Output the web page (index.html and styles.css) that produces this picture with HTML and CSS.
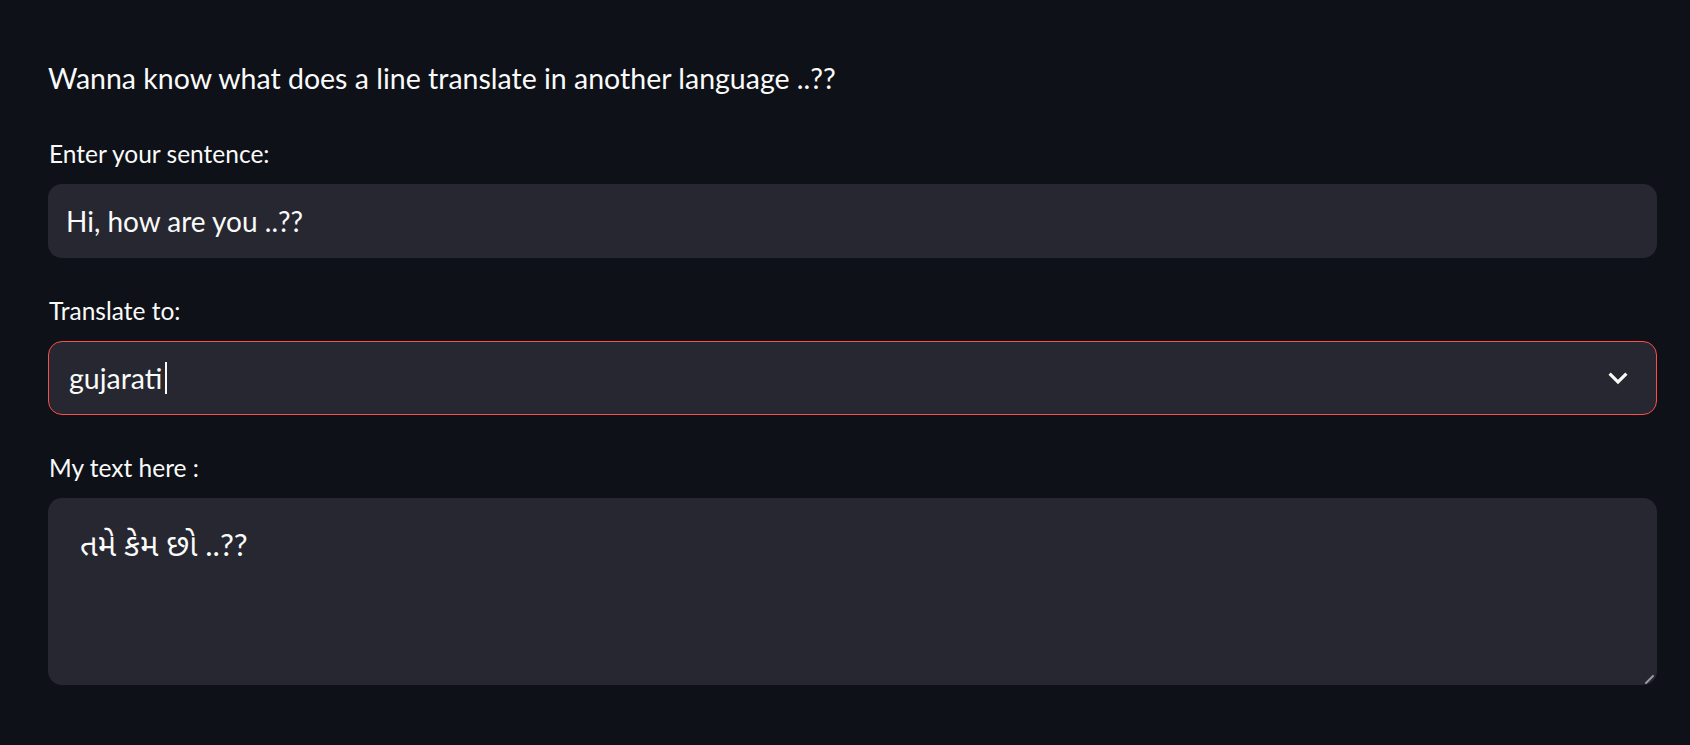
FILE: index.html
```html
<!DOCTYPE html>
<html lang="en">
<head>
<meta charset="utf-8">
<title>Translator</title>
<link rel="stylesheet" href="styles.css">
</head>
<body>
<main class="app">
  <p class="intro">Wanna know what does a line translate in another language ..??</p>

  <div class="widget">
    <label class="label" for="sentence">Enter your sentence:</label>
    <input id="sentence" class="field" type="text" value="Hi, how are you ..??">
  </div>

  <div class="widget">
    <label class="label">Translate to:</label>
    <div class="select">
      <span class="select-value">gujarati</span><span class="caret"></span>
      <svg class="chevron" viewBox="0 0 24 24" aria-hidden="true"><path d="M16.59 8.59L12 13.17 7.41 8.59 6 10l6 6 6-6z" fill="#fafafa"/></svg>
    </div>
  </div>

  <div class="widget">
    <label class="label" for="result">My text here :</label>
    <div class="area-wrap">
      <textarea id="result" class="area">તમે કેમ છો ..??</textarea>
      <svg class="grip" viewBox="0 0 10 10" aria-hidden="true"><path d="M2 9 L9 2" stroke="#9a9aa0" stroke-width="2" stroke-linecap="round"/></svg>
    </div>
  </div>
</main>
</body>
</html>
```

FILE: styles.css
```css
* { box-sizing: border-box; }

html, body {
  margin: 0;
  background: #0e1117;
  color: #fafafa;
  font-family: "Lato", "Noto Sans Gujarati", "Noto Sans", sans-serif;
}

.app {
  padding: 60px 33px 0 48px;
  display: flex;
  flex-direction: column;
}

.intro {
  margin: 0 0 44px 0;
  font-size: 28.5px;
  line-height: 36px;
}

.widget {
  display: flex;
  flex-direction: column;
  gap: 16px;
  margin-bottom: 39px;
}

.label {
  font-size: 24.5px;
  line-height: 28px;
  margin-left: 1px;
}

.field {
  height: 74px;
  width: 100%;
  border: none;
  outline: none;
  border-radius: 14px;
  background: #262730;
  color: #fafafa;
  font-family: inherit;
  font-size: 28px;
  padding: 0 18px;
}

.select {
  position: relative;
  height: 74px;
  border: 1px solid #ff4b4b;
  border-radius: 14px;
  background: #262730;
  display: flex;
  align-items: center;
  padding: 0 20px;
  font-size: 28.5px;
}

.caret {
  display: inline-block;
  width: 2px;
  height: 32px;
  background: #fafafa;
  margin-left: 3px;
}

.chevron {
  position: absolute;
  right: 19px;
  top: 50%;
  width: 38px;
  height: 38px;
  transform: translateY(-50%);
}

.area-wrap {
  position: relative;
}

.area {
  display: block;
  width: 100%;
  height: 187px;
  border: none;
  outline: none;
  resize: none;
  border-radius: 14px;
  background: #262730;
  color: #fafafa;
  font-family: inherit;
  font-size: 31px;
  line-height: 40px;
  padding: 26px 32px;
}

.grip {
  position: absolute;
  right: 3px;
  bottom: 1px;
  width: 10px;
  height: 10px;
}
```
